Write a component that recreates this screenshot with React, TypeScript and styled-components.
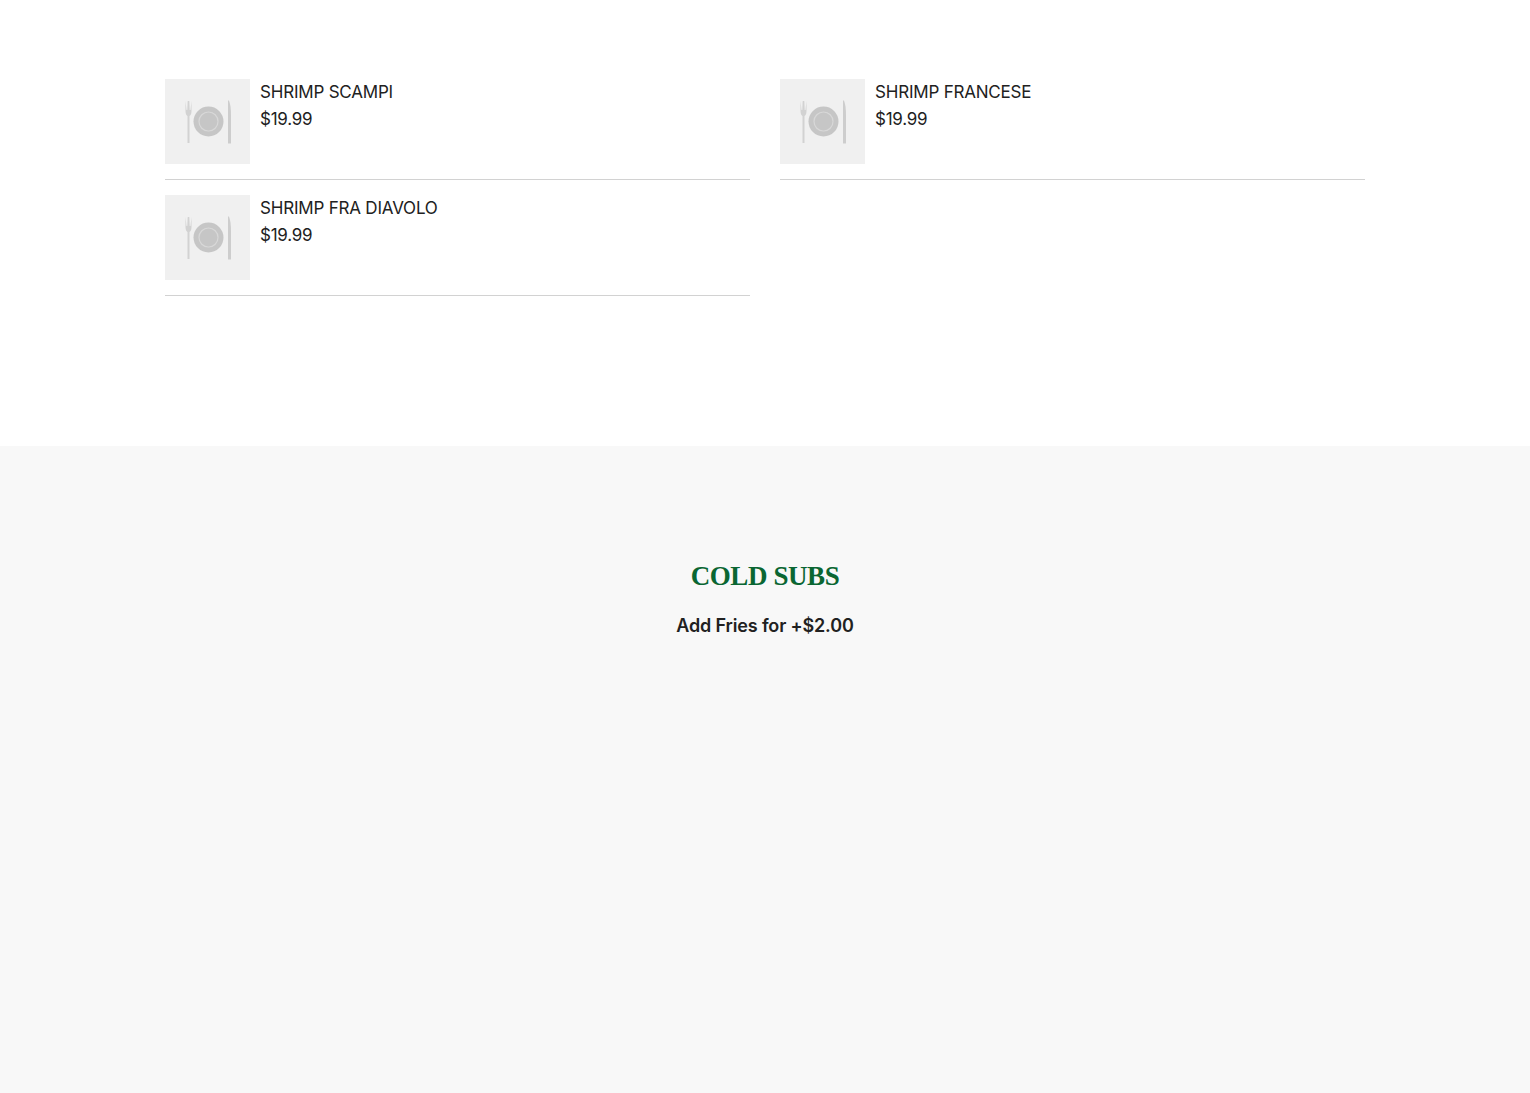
import { createGlobalStyle } from 'styled-components';
import styled from 'styled-components';

const GlobalStyle = createGlobalStyle`
  html, body { margin: 0; padding: 0; background: #fff; }
  body { font-family: 'Inter', 'Liberation Sans', sans-serif; color: #212121; }
`;

const Page = styled.div`
  width: 100%;
  min-height: 1093px;
  display: flex;
  flex-direction: column;
`;

const MenuSection = styled.section`
  height: 446px;
  box-sizing: border-box;
  padding: 79px 165px 0;
`;

const ItemGrid = styled.div`
  display: grid;
  grid-template-columns: 585px 585px;
  column-gap: 30px;
  align-items: start;
`;

const ItemRow = styled.div`
  display: flex;
  gap: 10px;
  height: 100px;
  margin-bottom: 15px;
  border-bottom: 1px solid #d2d2d2;
`;

const Thumb = styled.div`
  width: 85px;
  height: 85px;
  background: #f0f0f0;
  display: flex;
  align-items: center;
  justify-content: center;
`;

const ItemText = styled.div`
  display: flex;
  flex-direction: column;
  gap: 5px;
  padding-top: 2px;
`;

const ItemName = styled.div`
  font-size: 17px;
  line-height: 22px;
  font-weight: 400;
  letter-spacing: -0.2px;
`;

const ItemPrice = styled.div`
  font-size: 17px;
  line-height: 22px;
  letter-spacing: -0.25px;
`;

const ColdSection = styled.section`
  flex: 1;
  background: #f8f8f8;
  display: flex;
  flex-direction: column;
  align-items: center;
  padding-top: 112px;
`;

const Heading = styled.h2`
  margin: 0;
  font-family: 'Liberation Serif', serif;
  font-size: 27px;
  line-height: 36px;
  font-weight: 700;
  letter-spacing: -0.4px;
  color: #0a6632;
`;

const Note = styled.p`
  margin: 21px 0 0;
  font-size: 18px;
  line-height: 22px;
  font-weight: 600;
  letter-spacing: -0.15px;
`;

const PlateSvg = styled.svg`
  filter: blur(0.4px);
`;

const PlateIcon = () => (
  <PlateSvg width="50" height="46" viewBox="0 0 50 46">
    <circle cx="25.500" cy="22.500" r="15" fill="#c6c6c6" />
    <circle cx="25.500" cy="22.500" r="9.500" fill="none" stroke="#d8d8d8" strokeWidth="1.200" />
    <path d="M2.500 2v10q0 4 2 5v27h2v-27q2-1 2-5v-10l-1 9h-.8l-.4-9h-1.600l-.4 9h-.8z" fill="#d2d2d2" />
    <path d="M45 1.500h1q2 5 2 15v28h-3z" fill="#cdcdcd" />
  </PlateSvg>
);

const items = [
  { name: 'SHRIMP SCAMPI', price: '$19.99' },
  { name: 'SHRIMP FRANCESE', price: '$19.99' },
  { name: 'SHRIMP FRA DIAVOLO', price: '$19.99' },
];

const App = () => {
  return <Page>
    <GlobalStyle />
    <MenuSection>
      <ItemGrid>
        {items.map(item => (
          <ItemRow key={item.name}>
            <Thumb><PlateIcon /></Thumb>
            <ItemText>
              <ItemName>{item.name}</ItemName>
              <ItemPrice>{item.price}</ItemPrice>
            </ItemText>
          </ItemRow>
        ))}
      </ItemGrid>
    </MenuSection>
    <ColdSection>
      <Heading>COLD SUBS</Heading>
      <Note>Add Fries for +$2.00</Note>
    </ColdSection>
  </Page>;
}

export default App;
